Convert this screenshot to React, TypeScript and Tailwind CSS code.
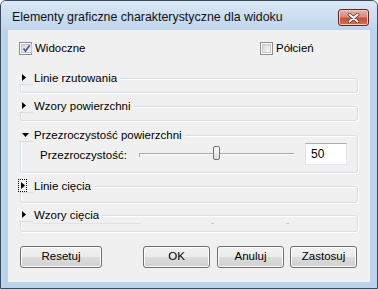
import type { ReactNode } from 'react';

function Check({ checked }: { checked?: boolean }) {
  return (
    <span className="w-[13px] h-[13px] border border-[#8e8f8f] bg-white p-[1px] flex shrink-0">
      <span className="flex-1 border border-[#c4c7cb] bg-gradient-to-br from-[#d3d6da] to-[#f8f8f8] flex items-center justify-center">
        {checked && (
          <svg width="9" height="9" viewBox="0 0 9 9">
            <path d="M1.5 4.5 L3.5 7 L7.8 1.2" fill="none" stroke="#4a5f94" strokeWidth="1.7" />
          </svg>
        )}
      </span>
    </span>
  );
}

function Arrow({ open }: { open?: boolean }) {
  return open ? (
    <svg width="7" height="4" viewBox="0 0 7 4">
      <polygon points="0,0 7,0 3.5,4" fill="#000" />
    </svg>
  ) : (
    <svg width="4" height="7" viewBox="0 0 4 7">
      <polygon points="0,0 4,3.5 0,7" fill="#000" />
    </svg>
  );
}

function Group({
  title,
  open,
  focused,
  className,
  children,
}: {
  title: string;
  open?: boolean;
  focused?: boolean;
  className: string;
  children?: ReactNode;
}) {
  return (
    <div className={`relative border border-[#d5dfe5] rounded-[3px] shadow-[inset_1px_1px_0_#fff,1px_1px_0_#fff] ${className}`}>
      <div className="absolute -top-[8px] -left-[2px] h-[14px] flex items-stretch bg-[#f0f0f0] pr-[3px]">
        <span className="w-[14px] flex items-center border-b border-[#d5dfe5] pl-[2px]">
          {focused ? (
            <span className="-ml-[3px] w-[9px] h-[13px] border border-dotted border-black flex items-center justify-center">
              <Arrow />
            </span>
          ) : (
            <span className="pl-[1px] flex">
              <Arrow open={open} />
            </span>
          )}
        </span>
        <span className="ml-[1px] leading-[14px]">{title}</span>
      </div>
      {children}
    </div>
  );
}

function Button({ label, className }: { label: string; className: string }) {
  return (
    <div
      className={`h-[22px] rounded-[3px] border border-[#707070] flex items-center justify-center bg-[linear-gradient(#f2f2f2_0%,#ebebeb_50%,#dddddd_50%,#cfcfcf_100%)] shadow-[inset_0_0_0_1px_#fcfcfc] ${className}`}
    >
      {label}
    </div>
  );
}

export default function App() {
  return (
    <div className="w-[378px] h-[289px] bg-white font-['Liberation_Sans',Arial,sans-serif] text-black">
      <div className="w-full h-full flex flex-col border border-[#3a4b60] rounded-t-[6px] bg-[#bcd3ec] overflow-hidden">
        <div className="h-[29px] flex items-start justify-between pl-[11px] pr-[8px] bg-gradient-to-b from-[#dbe8f6] to-[#bfd4ec]">
          <span className="pt-[8px] text-[12.4px] leading-[16px] text-[#111]">
            Elementy graficzne charakterystyczne dla widoku
          </span>
          <div className="mt-[8px] w-[31px] h-[17px] rounded-[3px] border border-[#5e2a26] flex items-center justify-center bg-[linear-gradient(#e8b2a6_0%,#d88c7c_45%,#c4523f_55%,#d0705a_100%)] shadow-[inset_0_0_0_1px_#f0c8bd]">
            <svg width="13" height="10" viewBox="0 0 13 10">
              <path d="M2.5 1.5 L10.5 8.5 M10.5 1.5 L2.5 8.5" stroke="#5a2a24" strokeWidth="3.4" strokeLinecap="round" />
              <path d="M2.5 1.5 L10.5 8.5 M10.5 1.5 L2.5 8.5" stroke="#fff" strokeWidth="2" strokeLinecap="round" />
            </svg>
          </div>
        </div>

        <div className="flex-1 mx-[7px] mb-[6px] bg-[#f0f0f0] flex flex-col px-[12px] pt-[12px] text-[11.5px]">
          <div className="flex items-center -ml-[1px] h-[13px]">
            <div className="w-[241px] flex items-center gap-[3px]">
              <Check checked />
              <span className="leading-[13px]">Widoczne</span>
            </div>
            <div className="flex items-center gap-[3px]">
              <Check />
              <span className="leading-[13px]">Półcień</span>
            </div>
          </div>

          <Group title="Linie rzutowania" className="mt-[23px] h-[15px]" />
          <Group title="Wzory powierzchni" className="mt-[13px] h-[15px]" />
          <Group title="Przezroczystość powierzchni" open className="mt-[14px] h-[38px]">
            <div className="h-full flex items-center pl-[19px]">
              <span className="w-[99px] pt-[3px]">Przezroczystość:</span>
              <div className="relative w-[155px] h-[14px]">
                <div className="absolute left-0 right-0 top-[6px] h-[2px] border-t border-[#a8a8a8] border-b border-b-[#ffffff]" />
                <div className="absolute left-0 top-[6px] w-[1px] h-[4px] bg-[#a8a8a8]" />
                <div className="absolute left-[74px] -top-[1px] w-[7px] h-[14px] rounded-[2px] border border-[#707070] bg-gradient-to-b from-[#fdfdfd] to-[#dcdcdc]" />
              </div>
              <div className="ml-[11px] w-[42px] h-[22px] bg-white border border-[#abadb3] border-r-[#e3e9ef] border-b-[#e3e9ef] border-l-[#e2e3ea] flex items-center pl-[5px] text-[12px]">
                50
              </div>
            </div>
          </Group>
          <Group title="Linie cięcia" focused className="mt-[13px] h-[17px]" />
          <Group title="Wzory cięcia" className="mt-[12px] h-[17px]">
            <div className="absolute left-[12px] top-[7px] w-[108px] h-[1px] bg-[#dfe3e8]" />
            <div className="absolute left-[190px] top-[7px] w-[3px] h-[1px] bg-[#c8ccd0]" />
            <div className="absolute left-[265px] top-[7px] w-[3px] h-[1px] bg-[#c8ccd0]" />
          </Group>

          <div className="mt-[14px] flex">
            <Button label="Resetuj" className="w-[82px]" />
            <Button label="OK" className="w-[67px] ml-[41px]" />
            <Button label="Anuluj" className="w-[67px] ml-[7px]" />
            <Button label="Zastosuj" className="w-[67px] ml-[6px]" />
          </div>
        </div>
      </div>
    </div>
  );
}
